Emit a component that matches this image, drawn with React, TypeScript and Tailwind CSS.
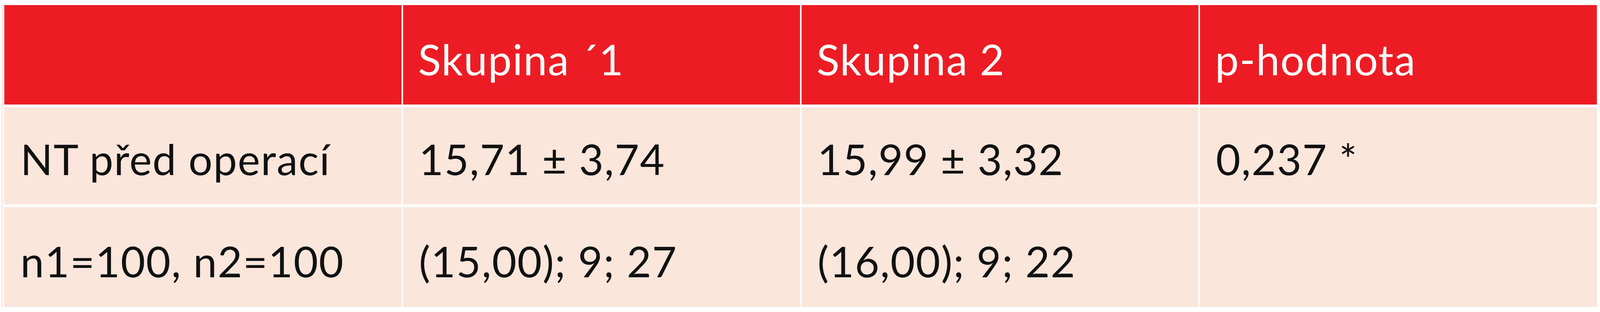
const header = ['', 'Skupina ´1', 'Skupina 2', 'p-hodnota'];

const rows: string[][] = [
  ['NT před operací', '15,71 ± 3,74', '15,99 ± 3,32', '0,237 *'],
  ['n1=100, n2=100', '(15,00); 9; 27', '(16,00); 9; 22', ''],
];

// extra top padding per body row so the text sits a little below centre, like the source
const rowPad = ['pt-[15px]', 'pt-[20px]'];

export default function App() {
  return (
    <div className="w-full h-[800px] bg-white flex pt-[13px] pl-[0.0974vw] pr-[0.195vw] font-['Lato',sans-serif]">
      <div className="w-[0.0835vw] h-[774px] shrink-0 bg-[#fbe1e1]" />
      <div className="ml-[0.0974vw] flex-1 h-[774px] grid grid-cols-4 grid-rows-[255px_249px_256px] gap-y-[7px] gap-x-[0.0974vw]">
        {header.map((h, i) => (
          <div
            key={'h' + i}
            className="bg-[#ed1c24] text-white text-[calc(0.96vw+8.625vh)] tracking-[0.018em] leading-none flex items-center whitespace-nowrap pl-[0.946vw] pt-[22px]"
          >
            {h}
          </div>
        ))}
        {rows.map((row, r) =>
          row.map((cell, c) => (
            <div
              key={r + '-' + c}
              className={`bg-[#fbe6dc] text-[#111111] text-[calc(0.96vw+8.625vh)] tracking-[0.018em] leading-none flex items-center whitespace-nowrap pl-[1.0vw] ${rowPad[r]}`}
            >
              {cell}
            </div>
          ))
        )}
      </div>
    </div>
  );
}
